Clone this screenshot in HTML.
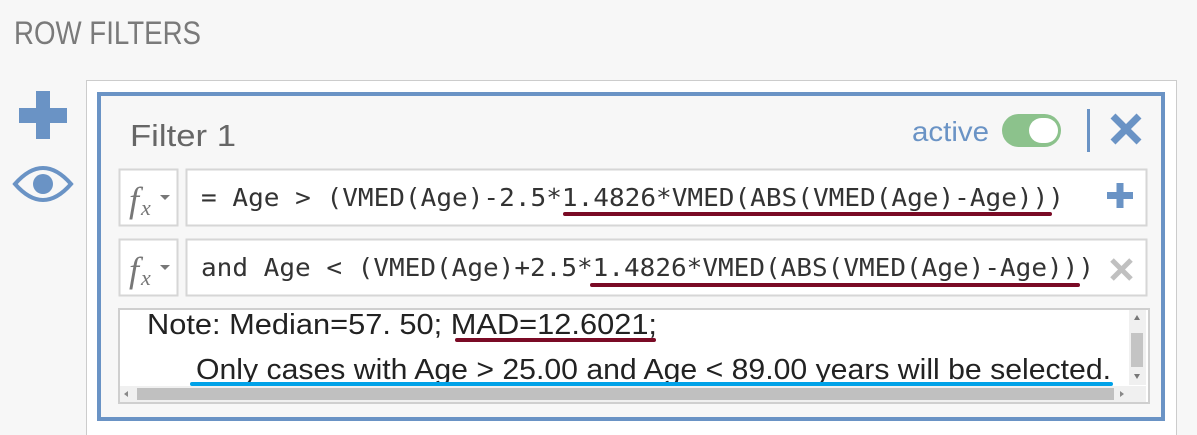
<!DOCTYPE html>
<html><head><meta charset="utf-8"><style>
html,body{margin:0;padding:0;background:#f7f7f7;width:1197px;height:435px;overflow:hidden}
svg{display:block}
</style></head><body>
<svg width="1197" height="435" xmlns="http://www.w3.org/2000/svg" font-family="Liberation Sans, sans-serif">
<rect width="1197" height="435" fill="#f7f7f7"/>
<text x="14" y="44" font-size="32" fill="#7a7a7a" textLength="187" lengthAdjust="spacingAndGlyphs">ROW FILTERS</text>
<rect x="19" y="108" width="48" height="15" fill="#6a93c5"/>
<rect x="36" y="91" width="14" height="48" fill="#6a93c5"/>
<path d="M15 184 Q43 152 71 184 Q43 216 15 184 Z" fill="none" stroke="#6a93c5" stroke-width="4"/>
<circle cx="43" cy="184" r="10" fill="#6a93c5"/>
<rect x="86.5" y="80.5" width="1090" height="360" fill="#ffffff" stroke="#cccccc" stroke-width="1"/>
<rect x="99" y="94" width="1064" height="325" fill="#f7f7f7" stroke="#6a93c5" stroke-width="4"/>
<text x="130" y="146" font-size="31" fill="#666" textLength="106" lengthAdjust="spacingAndGlyphs">Filter 1</text>
<text x="912" y="141" font-size="28" fill="#6a93c5" textLength="77" lengthAdjust="spacingAndGlyphs">active</text>
<rect x="1002" y="114" width="59" height="33" rx="16.5" fill="#8cc28c"/>
<rect x="1029" y="118" width="29" height="25" rx="12.5" fill="#fff"/>
<rect x="1087" y="109" width="3" height="43" fill="#6a93c5"/>
<path d="M1113 116 L1139 142 M1139 116 L1113 142" stroke="#6a93c5" stroke-width="7"/>
<rect x="119.5" y="169.5" width="58" height="56" fill="#fff" stroke="#d6d6d6" stroke-width="2"/>
<text x="129" y="212" font-size="36" font-style="italic" fill="#777" font-family="Liberation Serif, serif">f</text>
<text x="141" y="215" font-size="22" font-style="italic" fill="#777" font-family="Liberation Serif, serif">x</text>
<path d="M160 195 L170 195 L165 200 Z" fill="#777"/>
<rect x="186.5" y="169.5" width="960" height="56" fill="#fff" stroke="#d6d6d6" stroke-width="2"/>
<text x="201" y="206" font-size="25" fill="#333" font-family="DejaVu Sans Mono, Liberation Mono, monospace" textLength="863" lengthAdjust="spacingAndGlyphs">= Age &gt; (VMED(Age)-2.5*1.4826*VMED(ABS(VMED(Age)-Age)))</text>
<line x1="565" y1="214" x2="1050" y2="214" stroke="#7a0a25" stroke-width="4" stroke-linecap="round"/>
<rect x="1107" y="192" width="26" height="7" fill="#6a93c5"/>
<rect x="1116.5" y="183" width="7" height="25" fill="#6a93c5"/>
<rect x="119.5" y="239.5" width="58" height="56" fill="#fff" stroke="#d6d6d6" stroke-width="2"/>
<text x="129" y="282" font-size="36" font-style="italic" fill="#777" font-family="Liberation Serif, serif">f</text>
<text x="141" y="285" font-size="22" font-style="italic" fill="#777" font-family="Liberation Serif, serif">x</text>
<path d="M160 265 L170 265 L165 270 Z" fill="#777"/>
<rect x="186.5" y="239.5" width="960" height="56" fill="#fff" stroke="#d6d6d6" stroke-width="2"/>
<text x="201" y="276" font-size="25" fill="#333" font-family="DejaVu Sans Mono, Liberation Mono, monospace" textLength="893" lengthAdjust="spacingAndGlyphs">and Age &lt; (VMED(Age)+2.5*1.4826*VMED(ABS(VMED(Age)-Age)))</text>
<line x1="592" y1="285" x2="1078" y2="285" stroke="#7a0a25" stroke-width="4" stroke-linecap="round"/>
<path d="M1112 260 L1131 279 M1131 260 L1112 279" stroke="#c0c0c0" stroke-width="5"/>
<rect x="119" y="309" width="1030" height="94" fill="#fff" stroke="#cfcfcf" stroke-width="2"/>
<text x="147" y="334" font-size="29" fill="#222" textLength="510" lengthAdjust="spacingAndGlyphs">Note: Median=57. 50;  MAD=12.6021;</text>
<line x1="457" y1="340" x2="654" y2="340" stroke="#7a0a25" stroke-width="4" stroke-linecap="round"/>
<text x="196" y="379" font-size="29" fill="#222" textLength="915" lengthAdjust="spacingAndGlyphs">Only cases with Age &gt; 25.00 and Age &lt; 89.00 years will be selected.</text>
<line x1="192" y1="384" x2="1111" y2="384" stroke="#00a2e8" stroke-width="4" stroke-linecap="round"/>
<rect x="1129" y="310" width="17" height="75" fill="#f0f0f0"/>
<rect x="1131" y="333" width="12" height="34" fill="#c4c4c4"/>
<path d="M1134 320 L1140 320 L1137 315 Z M1134 374 L1140 374 L1137 379 Z" fill="#777"/>
<rect x="120" y="386" width="1026" height="16" fill="#f0f0f0"/>
<rect x="137" y="388" width="977" height="12" fill="#c0c0c0"/>
<path d="M128 391 L128 397 L124 394 Z M1120 391 L1120 397 L1124 394 Z" fill="#888"/>
</svg>
</body></html>
